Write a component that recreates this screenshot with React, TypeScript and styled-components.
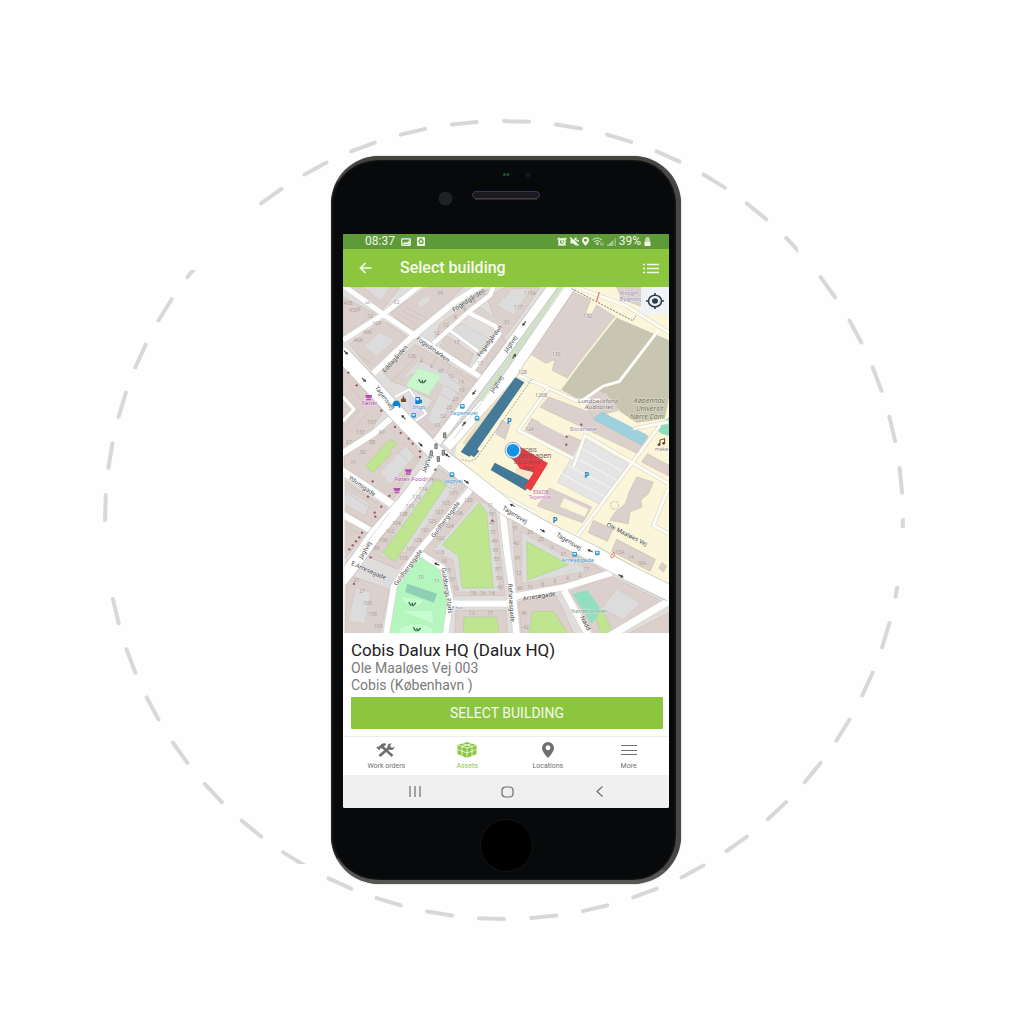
import React from "react";
import styled, { createGlobalStyle } from "styled-components";

const GlobalStyle = createGlobalStyle`
  *, *::before, *::after { box-sizing: border-box; }
  body {
    margin: 0;
    background: #fefefe;
    font-family: Roboto, "Open Sans", "Liberation Sans", sans-serif;
  }
`;

/* ---------- page and phone shell ---------- */

const Stage = styled.main`
  display: grid;
  place-items: center;
  min-height: 100vh;
  padding: 16px 12px 0 0;
  overflow: hidden;
`;

const Ring = styled.svg`
  grid-area: 1 / 1;
  width: 820px;
  height: auto;
`;

const Phone = styled.section`
  grid-area: 1 / 1;
  display: flex;
  flex-direction: column;
  width: 350px;
  max-width: 100%;
  padding: 0 7px 0 11px;
  background: #07090a;
  border-style: solid;
  border-width: 4px 5px 4px 1px;
  border-color: #474540 #474744 #565653 #26241f;
  border-radius: 48px;
  box-shadow: inset 0 0 2px 1px #1b1c1c, 0 0 1px #3a3936;
`;

const TopBezel = styled.svg`
  display: block;
  width: 100%;
  height: 74px;
`;

const BottomBezel = styled.div`
  display: flex;
  justify-content: center;
  align-items: center;
  height: 72px;
  padding-top: 2px;
`;

const HomeButton = styled.button`
  width: 53px;
  height: 53px;
  padding: 0;
  border: 1px solid #121617;
  border-radius: 50%;
  background: #000;
`;

const Screen = styled.div`
  display: flex;
  flex-direction: column;
  background: #fff;
  border-radius: 2px;
  overflow: hidden;
`;

/* ---------- bars ---------- */

const StatusBar = styled.header`
  display: flex;
  align-items: center;
  justify-content: space-between;
  height: 15px;
  padding: 0 18px 0 22px;
  background: #5f9a38;
  color: #eef6e6;
  font-size: 12px;
  line-height: 15px;
`;

const StatusGroup = styled.div<{ $gap: number }>`
  display: flex;
  align-items: center;
  gap: ${(p) => p.$gap}px;
`;

const AppBar = styled.header`
  display: flex;
  align-items: center;
  height: 38px;
  padding: 0 8px 0 12px;
  background: #8bc63e;
  color: #f6fbef;
`;

const AppTitle = styled.h1`
  flex: 1;
  margin: 0 0 0 25px;
  font-size: 16px;
  line-height: 20px;
  font-weight: 500;
`;

const IconButton = styled.button`
  display: flex;
  align-items: center;
  justify-content: center;
  padding: 0;
  border: 0;
  background: none;
  color: inherit;
  width: 20px;
  height: 20px;
`;

/* ---------- map ---------- */

const MapPane = styled.div`
  position: relative;
`;

const MapDrawing = styled.svg`
  display: block;
  width: 100%;
  height: auto;
`;

const LocateButton = styled(IconButton)`
  position: absolute;
  top: 0;
  right: 0;
  width: 28px;
  height: 27px;
  background: rgba(238, 243, 250, 0.9);
  color: #2c3e50;
`;

/* ---------- details and tabs ---------- */

const Details = styled.section`
  padding: 7px 6px 7px 8px;
  border-bottom: 1px solid #ededed;
`;

const BuildingName = styled.h2`
  margin: 0;
  color: #222;
  font-size: 17px;
  line-height: 20px;
  font-weight: 400;
`;

const Address = styled.p`
  margin: 0;
  color: #7b7b7b;
  font-size: 14px;
  line-height: 17px;
`;

const PrimaryButton = styled.button`
  display: block;
  width: 100%;
  height: 32px;
  margin-top: 3px;
  padding: 0;
  border: 0;
  border-radius: 1px;
  background: #8cc63f;
  color: #f4faec;
  font-family: inherit;
  font-size: 14px;
  line-height: 20px;
  text-transform: uppercase;
`;

const Tabs = styled.nav`
  display: grid;
  grid-template-columns: repeat(4, 1fr);
  height: 38px;
  padding: 0 0 0 3px;
`;

const Tab = styled.button<{ $active?: boolean }>`
  display: flex;
  flex-direction: column;
  align-items: center;
  gap: 3px;
  padding: 5px 0 0;
  border: 0;
  background: none;
  color: ${(p) => (p.$active ? "#8bc540" : "#6f6f6f")};
  font-family: inherit;
  font-size: 7px;
  line-height: 10px;
`;

const SystemBar = styled.nav`
  display: grid;
  grid-template-columns: repeat(3, 1fr);
  justify-items: center;
  align-items: center;
  height: 33px;
  padding: 0 24px 0 26px;
  background: #f0f0f1;
  color: #6d6d6d;
`;

/* ---------- map data: 3 drawing units to one screen pixel ---------- */

type Street = { d: string; w: number };

const STREETS: Street[] = [
  { d: "M9 165L130 87L240 0", w: 15 },
  { d: "M9 0L130 87L225 150L300 198L425 278", w: 15 },
  { d: "M100 265L215 155L345 50L425 0", w: 17 },
  { d: "M280 175L385 80L450 30L462 0", w: 13 },
  { d: "M385 82L465 122L478 145L395 258", w: 13 },
  { d: "M330 135L415 198", w: 9 },
  { d: "M0 508L100 445L168 385", w: 18 },
  { d: "M9 335L42 372L9 408", w: 9 },
  { d: "M165 335L208 312L258 385L215 415", w: 7 },
  { d: "M0 553L80 605L160 660", w: 22 },
  { d: "M0 683L95 737", w: 18 },
  { d: "M395 608L235 798L162 902L138 1050", w: 18 },
  { d: "M235 800L308 848L332 945L316 1050", w: 17 },
  { d: "M335 955L500 955L530 932L675 905L815 862", w: 19 },
  { d: "M488 680L500 790L515 900L530 1050", w: 20 },
  { d: "M672 915L748 1055", w: 20 },
  { d: "M990 945L800 1058", w: 22 },
];

const MAIN_STREETS: Street[] = [
  { d: "M0 200L90 296L190 405L285 500L400 588L500 668L620 735L760 805L870 865L992 925", w: 46 },
  { d: "M640 0L485 213L290 470", w: 27 },
  { d: "M692 0L508 272L320 485", w: 32 },
  { d: "M300 490L270 545L205 635L110 740L50 825L0 890", w: 38 },
];

const CAMPUS_ROADS = [
  "M700 2L860 62L992 145",
  "M515 262L620 305L705 345L780 345",
  "M625 308L535 435L600 468L700 520",
  "M700 545L735 450L870 528L985 595",
  "M960 420L705 762",
  "M590 685L480 625",
  "M880 430L985 410",
  "M985 610L940 720L985 745",
];

const BUILDINGS = [
  "20,5 180,5 127,74",
  "9,35 108,86 9,150",
  "150,82 262,5 370,5 340,36 218,136",
  "28,177 127,106 200,152 92,252",
  "130,262 225,178 412,285 292,468 218,412 250,385 280,345 190,300 160,290",
  "298,118 440,12 452,22 312,142 285,160",
  "402,76 420,66 478,105 466,112",
  "318,150 400,205 385,242 300,182",
  "408,242 484,150 500,170 415,276",
  "9,240 128,378 98,428 9,492",
  "14,508 155,400 248,508 158,644 14,552",
  "9,582 140,668 98,726 9,672",
  "9,705 80,742 12,822",
  "292,548 378,600 226,796 172,852 82,812",
  "402,620 462,650 472,720 495,930 345,932 322,838 248,796",
  "348,975 498,975 502,1045 345,1045",
  "22,868 148,912 120,1045 14,1045",
  "518,710 555,718 800,862 680,892 530,915",
  "535,950 648,930 702,1045 545,1045",
  "690,918 812,872 975,952 812,1040 765,1045",
  "865,1045 987,982 987,1045",
  "440,38 495,5 600,5 540,95 490,160 470,110",
  "700,20 752,45 736,84 756,86 770,60 826,95 682,278 636,255 646,222 618,234 570,205",
  "627,335 785,395 925,455 900,508 600,365",
  "575,400 630,425 728,468 702,512 555,435",
  "922,505 987,540 987,572 905,530",
  "628,608 755,665 728,712 592,662",
  "486,405 510,418 495,462 467,445",
  "890,575 940,590 925,625 902,645 906,665 870,680 865,715 810,705 826,680 856,655 868,620",
  "760,705 818,732 802,768 745,742",
  "830,762 946,822 930,858 815,798",
  "966,832 980,842 970,860 956,848",
  "830,5 930,5 900,62 845,40",
  "760,310 800,325 835,375 760,395 740,370",
];

const COURTYARDS = [
  "68,5 150,5 124,46",
  "70,182 120,140 166,166 110,212",
  "180,285 238,225 372,290 290,430 262,400 310,300 235,258",
  "345,125 368,115 450,162 410,200",
  "470,60 520,10 575,10 520,90",
  "48,905 92,922 74,1015 24,1008",
  "120,560 200,480 225,510 150,600",
  "20,615 90,655 75,690 9,655",
  "265,580 350,600 200,800 120,815",
  "410,645 450,660 480,920 355,920 340,825 280,795",
  "545,740 750,855 545,895",
  "830,912 902,952 850,1002 785,970",
  "230,50 262,30 275,45 240,68",
];

const GREENS = [
  "78,540 150,462 172,474 152,492 152,506 98,562",
  "290,580 322,596 165,828 128,802",
  "418,652 440,680 460,908 366,908 356,812 308,778",
  "372,995 470,995 478,1045 370,1045",
  "560,768 685,838 562,885",
  "578,978 640,978 685,1045 568,1045",
  "765,990 790,975 815,1038 785,1050",
];

const HOUSE_ROWS: { from: [number, number]; to: [number, number]; n: string[] }[] = [
  { from: [24, 55], to: [90, 92], n: ["40B", "6", "12"] },
  { from: [55, 165], to: [110, 115], n: ["40A", "40A", "104"] },
  { from: [215, 212], to: [362, 290], n: ["126", "4", "6", "47", "12", "14"] },
  { from: [365, 315], to: [290, 420], n: ["16", "23", "25", "32", "30"] },
  { from: [290, 145], to: [430, 24], n: ["12", "12", "8", "6", "4", "8"] },
  { from: [26, 470], to: [95, 410], n: ["27", "137", "107"] },
  { from: [125, 440], to: [40, 530], n: ["90", "88", "92", "11"] },
  { from: [270, 585], to: [110, 790], n: ["176", "114", "112", "110", "108", "104", "102", "100", "98"] },
  { from: [340, 625], to: [190, 820], n: ["131", "125", "127", "123", "121", "129", "117", "115"] },
  { from: [385, 645], to: [300, 760], n: ["120", "126", "124", "122"] },
  { from: [450, 660], to: [480, 905], n: ["11", "15", "47", "51", "49", "53", "55", "57", "59", "43"] },
  { from: [300, 800], to: [348, 910], n: ["118", "16", "15", "13", "12"] },
  { from: [400, 925], to: [455, 925], n: ["18", "16", "14"] },
  { from: [395, 985], to: [450, 985], n: ["13", "17"] },
  { from: [525, 730], to: [540, 910], n: ["31", "42", "47", "12", "46"] },
  { from: [570, 740], to: [738, 852], n: ["23", "25", "2", "21", "7", "17"] },
  { from: [570, 905], to: [720, 870], n: ["11", "8", "6", "4", "2"] },
  { from: [552, 985], to: [558, 1025], n: ["46", "42"] },
  { from: [50, 885], to: [115, 1022], n: ["21", "27", "108", "105", "103"] },
  { from: [40, 75], to: [300, 25], n: ["430", "62", "54"] },
  { from: [570, 25], to: [500, 110], n: ["115A", "117", "31"] },
  { from: [350, 170], to: [420, 235], n: ["15", "17"] },
  { from: [840, 800], to: [905, 835], n: ["13A", "14", "18A"] },
];

type Label = { x: number; y: number; r?: number; t: string; s?: number; c?: string; i?: boolean; bare?: boolean };

const LABELS: Label[] = [
  { x: 135, y: 263, r: -48, t: "Eddagården" },
  { x: 228, y: 162, r: 36, t: "Fogedmarken" },
  { x: 342, y: 80, r: -33, t: "Fogedgården" },
  { x: 420, y: 216, r: -53, t: "Fogedgården" },
  { x: 104, y: 308, r: 53, t: "Tagensvej" },
  { x: 458, y: 322, r: -55, t: "Jagtvej" },
  { x: 500, y: 202, r: -55, t: "Jagtvej" },
  { x: 25, y: 580, r: 35, t: "Ydunsgade" },
  { x: 255, y: 560, r: -66, t: "Jagtvej" },
  { x: 66, y: 822, r: -60, t: "Jagtvej" },
  { x: 32, y: 838, r: 24, t: "E.Arresøgade" },
  { x: 282, y: 758, r: -53, t: "Guldbergsgade" },
  { x: 170, y: 902, r: -53, t: "Guldbergsgade" },
  { x: 304, y: 848, r: 81, t: "Guldbergs Plads" },
  { x: 486, y: 672, r: 31, t: "Tagensvej" },
  { x: 648, y: 752, r: 31, t: "Tagensvej" },
  { x: 504, y: 896, r: 86, t: "Refsnæsgade" },
  { x: 550, y: 946, r: -9, t: "Arresøgade" },
  { x: 720, y: 996, r: 62, t: "Nødd" },
  { x: 798, y: 722, r: 27, t: "Ole Maaløes Vej" },
  { x: 714, y: 354, t: "Lundbeckfond-", s: 18, c: "#7d7677" },
  { x: 734, y: 370, t: "Auditoriet", s: 18, c: "#7d7677" },
  { x: 882, y: 352, t: "Københav", s: 21, c: "#6c6d45", i: true },
  { x: 888, y: 378, t: "Universit", s: 21, c: "#6c6d45", i: true },
  { x: 870, y: 402, t: "Nørre Cam", s: 21, c: "#6c6d45", i: true },
  { x: 690, y: 438, t: "Biocenteret", s: 15, c: "#8d88b4" },
  { x: 842, y: 29, t: "Krogh", s: 18, c: "#8b8fbb" },
  { x: 838, y: 47, t: "Bygning", s: 18, c: "#8b8fbb" },
  { x: 66, y: 360, t: "Fætter", s: 15, c: "#b54cb5" },
  { x: 164, y: 586, t: "Føtex Food", s: 18, c: "#b54cb5" },
  { x: 218, y: 372, t: "Ingo", s: 18, c: "#4f8fca" },
  { x: 330, y: 389, t: "Tagensvej", s: 18, c: "#4a96d2" },
  { x: 312, y: 594, t: "Jagtvej", s: 18, c: "#4a96d2" },
  { x: 664, y: 830, t: "Arresøgade", s: 18, c: "#4a96d2" },
  { x: 580, y: 626, t: "ESSOB", s: 15, c: "#b0609d" },
  { x: 566, y: 642, t: "Tagensvej", s: 15, c: "#c47fb0" },
  { x: 546, y: 500, t: "COBIS", s: 15, c: "#75545a", bare: true },
  { x: 508, y: 518, t: "Copenhagen", s: 21, c: "#75545a", bare: true },
  { x: 522, y: 536, t: "Bio Science", s: 15, c: "#75545a", bare: true },
  { x: 550, y: 554, t: "Park", s: 15, c: "#75545a", bare: true },
  { x: 694, y: 983, t: "Nørrebrohallen", s: 15, c: "#6da383" },
  { x: 76, y: 55, t: "4371", s: 12, c: "#b48bb4" },
  { x: 535, y: 266, t: "128", s: 15, c: "#8b8080" },
  { x: 730, y: 99, t: "132", s: 15, c: "#8b8080" },
  { x: 636, y: 212, t: "130", s: 15, c: "#8b8080" },
  { x: 586, y: 334, t: "126B", s: 15, c: "#8b8080" },
  { x: 556, y: 437, t: "124", s: 15, c: "#8b8080" },
  { x: 234, y: 882, t: "10", s: 15, c: "#5c8a66" },
  { x: 282, y: 892, t: "11", s: 15, c: "#5c8a66" },
  { x: 945, y: 496, t: "make", s: 15, c: "#8b8080" },
  { x: 336, y: 970, t: "P-hus", s: 12, c: "#6a77c8" },
];

const ARROWS: [number, number, number][] = [
  [18, 202, 45], [72, 284, 45], [190, 395, 225], [242, 478, 45], [402, 322, 125], [372, 415, -52],
  [552, 115, 125], [523, 212, -52], [322, 510, 215], [380, 590, 35], [290, 836, 205], [517, 660, 205],
  [608, 736, 30], [750, 796, 205], [843, 872, 30],
];

const SIGNALS: [number, number][] = [[314, 450], [288, 483], [274, 504], [310, 502], [295, 521]];
const BUS_STOPS: [number, number][] = [[221, 390], [367, 363], [411, 399], [336, 568], [704, 807], [772, 803]];
const PARKING: [number, number][] = [[508, 408], [740, 571], [645, 705]];
const SHOPS: [number, number][] = [[86, 337], [205, 560], [171, 616]];
const DOTS: [number, number][] = [
  [25, 262], [50, 300], [124, 376], [165, 425], [182, 443], [206, 460], [218, 475], [240, 498], [240, 515],
  [98, 588], [148, 632], [84, 634], [124, 664], [104, 682], [106, 694], [66, 742], [58, 756], [48, 768],
  [38, 780], [28, 792], [92, 816], [286, 553], [457, 706], [42, 896], [724, 418], [680, 454], [679, 478],
];

function CityMap() {
  return (
    <MapDrawing viewBox="9 5 978 1038" role="img" aria-label="Map around Tagensvej and Jagtvej, København">
      <rect x="0" y="0" width="1000" height="1060" fill="#e0dedd" />
      <polygon points="700,0 990,0 990,905 870,848 760,788 620,715 500,645 420,582 345,510 350,470" fill="#fbf5d9" />
      <polygon points="830,97 987,165 987,335 975,400 890,412 842,380 797,322 720,345 660,312 720,228" fill="#c8c6b0" />
      <polygon points="987,395 948,432 965,445 987,452" fill="#8edcc0" />

      <g fill="#dbd0cb" stroke="#cfbdb6" strokeWidth="2">
        {BUILDINGS.map((p) => <polygon key={p} points={p} />)}
      </g>
      <g fill="#dddcdc" stroke="#d0c2bb" strokeWidth="1.5">
        {COURTYARDS.map((p) => <polygon key={p} points={p} />)}
      </g>
      <g fill="#bfe590" stroke="#b4cf95" strokeWidth="2">
        {GREENS.map((p) => <polygon key={p} points={p} />)}
      </g>
      <g stroke="#cfbdb6" strokeWidth="2" fill="none">
        <path d="M160 95L215 130M172 85L230 118M185 75L245 106M196 66L256 96M50 205L95 235M140 112L190 146" />
        <path d="M32 605L110 655M24 625L95 670M30 730L62 748M145 640L235 512M175 500L215 540M190 470L230 520" />
        <path d="M30 440L85 380M15 425L60 370M345 255L395 290M330 280L385 315M315 300L372 335M300 325L358 360" />
        <path d="M150 292L232 212M250 215L235 240M290 215L276 240M330 240L318 264M95 330L60 365M30 300L70 350" />
        <path d="M275 575L360 625M250 610L275 625M225 645L250 660M200 680L225 695M175 715L200 730M150 750L175 765" />
      </g>

      {/* park, schools and pools */}
      <polygon points="225,262 238,248 305,270 266,330 196,302" fill="#c9f6cd" stroke="#a9d9a9" />
      <polygon points="242,812 314,855 322,955 308,1045 140,1045 160,920" fill="#b4f6bd" />
      <path d="M182 935Q205 975 240 960L250 945M185 975L278 975L280 1015M178 1030Q230 1000 278 1030L278 1045L180 1045Z" fill="#c7fbd0" stroke="#a6dfa6" strokeDasharray="6 3" />
      <polygon points="202,895 291,925 282,952 195,920" fill="#8fcfb5" />
      <polygon points="698,925 742,915 785,975 755,1015" fill="#8fdfc0" />
      <polygon points="785,380 922,450 905,480 760,402" fill="#9fd0de" stroke="#8bb9c6" />
      <polygon points="612,390 695,430 682,455 598,412" fill="#fbf5d9" />
      <polygon points="672,638 745,672 734,694 660,664" fill="#fbf5d9" />
      <polygon points="730,458 865,535 785,660 652,590" fill="#e6e5e6" stroke="#d6cfce" strokeWidth="2" />
      <path d="M715 485L848 558M698 512L832 585M680 538L815 610M665 565L800 638" stroke="#f7f7f7" strokeWidth="3" />
      <polygon points="395,75 420,66 487,112 475,125" fill="#dcd3ce" />
      <path d="M200 340L212 325L248 380L220 402Z" fill="#dad8e8" />

      {/* minor streets */}
      <path d="M15 832L70 850L165 898" stroke="#dcdbe0" strokeWidth="24" fill="none" />
      <g fill="none" stroke="#d2cecc" strokeLinejoin="round">
        {STREETS.map((s) => <path key={s.d} d={s.d} strokeWidth={s.w + 3} />)}
        {CAMPUS_ROADS.map((d) => <path key={d} d={d} strokeWidth="12" />)}
      </g>
      <g fill="none" stroke="#fff" strokeLinejoin="round">
        {STREETS.map((s) => <path key={s.d} d={s.d} strokeWidth={s.w} />)}
      </g>
      <g fill="none" stroke="#fdfcf1" strokeLinejoin="round">
        {CAMPUS_ROADS.map((d) => <path key={d} d={d} strokeWidth="9" />)}
      </g>
      <path d="M720 350L790 302L838 288L955 135" fill="none" stroke="#fdfcf8" strokeWidth="9" />
      <path d="M826 97L720 232L662 312" fill="none" stroke="#fbf5d9" strokeWidth="5" />

      {/* main streets */}
      <g fill="none" stroke="#c4c0bd" strokeLinejoin="round">
        {MAIN_STREETS.map((s) => <path key={s.d} d={s.d} strokeWidth={s.w + 4} />)}
      </g>
      <path d="M545 245L372 478" stroke="#eadfc8" strokeWidth="14" fill="none" />
      <g fill="none" stroke="#fff" strokeLinejoin="round">
        {MAIN_STREETS.map((s) => <path key={s.d} d={s.d} strokeWidth={s.w} />)}
      </g>
      <path d="M667 0L497 240L420 345" fill="none" stroke="#cbe3c4" strokeWidth="11" />
      <path d="M658 0L488 236L330 450M677 0L506 246L340 462" fill="none" stroke="#cdcac7" strokeWidth="2" />
      <path d="M265 575L120 765M150 680L60 800" stroke="#cfcac8" strokeWidth="2" />

      {/* highlighted buildings */}
      <polygon points="526,276 553,291 412,492 418,498 402,516 394,510 388,514 362,500" fill="#457b99" />
      <path d="M575 282L430 490L408 520L390 528L362 522" fill="none" stroke="#69809a" strokeWidth="2" strokeDasharray="6 4" />
      <path d="M695 10L878 106L888 92" fill="none" stroke="#7d7f9c" strokeWidth="3" strokeDasharray="6 4" />
      <path d="M778 20L770 48" stroke="#e5846c" strokeWidth="4" />
      <polygon points="464,532 571,586 557,616 452,554" fill="#427a96" />
      <polygon points="494,499 540,484 624,534 573,616 552,606 580,562 540,552 528,532" fill="#ea3d42" />
      <polygon points="530,548 552,554 578,560 566,582 524,560" fill="#f3e6cd" />
      <circle cx="824" cy="660" r="12" fill="none" stroke="#c9bdb0" strokeWidth="3" strokeDasharray="7 3" />
      <path d="M812 812L822 800L824 812L815 818Z" fill="none" stroke="#e5846c" strokeWidth="3" />

      {/* house numbers */}
      <g fill="#ab9d97" fontFamily='"Noto Sans", sans-serif' fontSize="15">
        {HOUSE_ROWS.flatMap((row, k) =>
          row.n.map((n, i) => {
            const f = row.n.length > 1 ? i / (row.n.length - 1) : 0;
            return (
              <text key={k + "-" + i} x={row.from[0] + (row.to[0] - row.from[0]) * f} y={row.from[1] + 5 + (row.to[1] - row.from[1]) * f} textAnchor="middle">
                {n}
              </text>
            );
          })
        )}
      </g>

      {/* points of interest */}
      {DOTS.map(([x, y]) => <circle key={x + "," + y} cx={x} cy={y} r="3.5" fill="#9b5468" />)}
      {ARROWS.map(([x, y, r]) => (
        <path key={x + "," + y} transform={`translate(${x} ${y}) rotate(${r})`} d="M-9 -1.5H0V-5L9 0L0 5V1.5H-9Z" fill="#3c3c3c" />
      ))}
      {SIGNALS.map(([x, y]) => (
        <g key={x + "," + y}>
          <rect x={x - 5} y={y - 9} width="10" height="18" rx="4" fill="#777" />
          <path d={`M${x - 2} ${y - 4}h4M${x - 2} ${y}h4M${x - 2} ${y + 4}h4`} stroke="#ddd" strokeWidth="2" />
        </g>
      ))}
      {BUS_STOPS.map(([x, y]) => (
        <g key={x + "," + y}>
          <rect x={x - 7} y={y - 7} width="14" height="14" rx="3" fill="#3a9acb" />
          <rect x={x - 4} y={y - 4} width="8" height="5" fill="#d5edf8" />
        </g>
      ))}
      {SHOPS.map(([x, y]) => (
        <path key={x + "," + y} d={`M${x - 11} ${y - 8}h22l-4 10h-14zM${x - 7} ${y + 4}h14v4h-14z`} fill="#b650b4" />
      ))}
      <path d="M157 367V356L163 346H175L181 356V367H176V362H163V367Z" fill="#0d85c8" />
      <path d="M226 335H240V341L246 345V354H240V356H226ZM229 338V345H237V338Z" fill="#0d85c8" />
      <path d="M183 350V340H187L190 330L194 340H198V350Z" fill="#7b4a26" />
      <g fill="none" stroke="#2f6b3c" strokeWidth="4">
        <path d="M236 282L243 293M247 284V294M258 284L250 293" />
        <path d="M206 950L213 961M217 952V962M228 952L220 961" />
        <path d="M220 1026L227 1037M231 1028V1038M242 1028L234 1037" />
      </g>
      <path d="M960 478V464L974 460V474" fill="none" stroke="#6b4020" strokeWidth="3" />
      <circle cx="957" cy="478" r="4" fill="#6b4020" />
      <circle cx="971" cy="474" r="4" fill="#6b4020" />
      {PARKING.map(([x, y]) => (
        <text key={x + "," + y} x={x} y={y + 8} textAnchor="middle" fontFamily='"Noto Sans", sans-serif' fontWeight="700" fontSize="24" fill="#1f86c6">P</text>
      ))}

      {LABELS.map((l) => (
        <text
          key={l.t + l.x}
          transform={`translate(${l.x} ${l.y}) rotate(${l.r ?? 0})`}
          fontFamily='"Noto Sans", "Open Sans", sans-serif'
          fontSize={l.s ?? 18}
          fontStyle={l.i ? "italic" : "normal"}
          fill={l.c ?? "#3b3b3b"}
          stroke={l.bare ? "none" : "#fff"}
          strokeWidth="3"
          strokeOpacity="0.5"
          paintOrder="stroke"
        >
          {l.t}
        </text>
      ))}

      <circle cx="519" cy="495" r="24" fill="#f2f7fb" stroke="#6c8aa8" strokeWidth="2" />
      <circle cx="519" cy="495" r="19" fill="#1492e6" />
      <rect x="9" y="560" width="5" height="490" fill="#f3f1f2" />
    </MapDrawing>
  );
}

/* ---------- icons ---------- */

const PictureIcon = () => (
  <svg width="10" height="8" viewBox="0 0 20 16" fill="none" stroke="currentColor" strokeWidth="2.5">
    <rect x="1.5" y="1.5" width="17" height="13" rx="1" />
    <path d="M3 12L8 8L11 10L17 5V12.500Z" fill="currentColor" strokeWidth="1" />
  </svg>
);
const CaptureIcon = () => (
  <svg width="8" height="9" viewBox="0 0 16 18">
    <rect width="16" height="18" rx="2" fill="currentColor" />
    <circle cx="8" cy="9" r="4" fill="none" stroke="#5f9a38" strokeWidth="2.500" />
    <path d="M5 2.500H11" stroke="#5f9a38" strokeWidth="1.500" />
  </svg>
);
const AlarmIcon = () => (
  <svg width="10" height="9" viewBox="0 0 20 18" fill="none" stroke="currentColor" strokeWidth="3.500">
    <circle cx="10" cy="9.500" r="6" />
    <path d="M1 5L5 1.500M19 5L15 1.500M3 17L6 14M17 17L14 14M10 6V10L13 11" strokeWidth="3" />
  </svg>
);
const MuteIcon = () => (
  <svg width="9" height="9" viewBox="0 0 18 18">
    <path d="M1 5H6L13 0V18L6 13H1Z" fill="currentColor" />
    <path d="M2 0L18 14" stroke="#5f9a38" strokeWidth="2" />
    <path d="M0 1L17 17M14 6L18 9" stroke="currentColor" strokeWidth="3" />
  </svg>
);
const PinIcon = ({ w, h, hole }: { w: number; h: number; hole: string }) => (
  <svg width={w} height={h} viewBox="0 0 14 18" preserveAspectRatio="none">
    <path d="M7 0A7 6.700 0 0 0 0 6.700C0 11.500 7 18 7 18S14 11.500 14 6.700A7 6.700 0 0 0 7 0Z" fill="currentColor" />
    <circle cx="7" cy="6.500" r="2.800" fill={hole} />
  </svg>
);
const WifiIcon = () => (
  <svg width="12" height="9" viewBox="0 0 24 18" fill="none" stroke="currentColor" strokeWidth="2" opacity="0.85">
    <path d="M1 6Q10 -2 20 6M4 9.500Q10 4 17 9.500M7.500 12.500Q10.500 10 14 12.500" />
    <path d="M9 14L10.500 16L12 14Z" fill="currentColor" />
    <path d="M18 11V17M22 11V17" strokeWidth="1.500" />
  </svg>
);
const SignalIcon = () => (
  <svg width="9" height="8" viewBox="0 0 18 16" stroke="currentColor" strokeWidth="2">
    <path d="M2 13V16M6 10V16M10 6V16" />
    <path d="M14 3V16M17 0V16" opacity="0.4" />
  </svg>
);
const BatteryIcon = () => (
  <svg width="7" height="9" viewBox="0 0 14 18" fill="currentColor">
    <path d="M4 0H10V3H12V9H2V3H4Z" opacity="0.65" />
    <path d="M1 9H13V18H1Z" />
  </svg>
);
const BackArrowIcon = () => (
  <svg width="13" height="12" viewBox="0 0 13 12" fill="none" stroke="currentColor" strokeWidth="1.700">
    <path d="M12.500 6H1.500M6.500 1L1.500 6L6.500 11" />
  </svg>
);
const ListIcon = () => (
  <svg width="16" height="11" viewBox="0 0 16 11" stroke="currentColor" strokeWidth="1.500">
    <path d="M0 1.500H2M4 1.500H16M0 5.500H2M4 5.500H16M0 9.500H2M4 9.500H16" />
  </svg>
);
const LocateIcon = () => (
  <svg width="18" height="16" viewBox="0 0 18 16" fill="none" stroke="currentColor">
    <ellipse cx="9" cy="8" rx="6.500" ry="5.800" strokeWidth="1.600" />
    <path d="M9 0V3M9 13V16M0 8H3M15 8H18" strokeWidth="1.600" />
    <ellipse cx="9" cy="8" rx="3" ry="2.700" fill="currentColor" stroke="none" />
  </svg>
);
const ToolsIcon = () => (
  <svg width="20" height="16" viewBox="0 0 40 32" fill="none" stroke="currentColor">
    <path d="M13 10L33 28" strokeWidth="5" />
    <path d="M4 11L11 4Q16 1 21 4L12 13Z" fill="currentColor" stroke="none" />
    <path d="M2 10L8 15" strokeWidth="4" />
    <path d="M7 28L27 11" strokeWidth="5.500" />
    <path d="M31 3A7 6.500 0 1 0 37 9L32 12L28 8Z" fill="currentColor" stroke="none" />
  </svg>
);
const AssetsIcon = () => (
  <svg width="20" height="16" viewBox="0 0 40 32">
    <path d="M20 0L39 6V24L20 32L1 24V6Z" fill="currentColor" />
    <path d="M1 6L20 12L39 6M20 12V32M1 15L20 22L39 15M10 3L30 9V28M30 3L10 9V28" fill="none" stroke="#fff" strokeWidth="1.500" />
  </svg>
);
const MenuIcon = () => (
  <svg width="16" height="16" viewBox="0 0 16 16" stroke="currentColor" strokeWidth="1">
    <path d="M0 3.500H16M0 8.500H16M0 12.500H16" />
  </svg>
);
const RecentsIcon = () => (
  <svg width="12" height="11" viewBox="0 0 12 11" stroke="currentColor" strokeWidth="1.200">
    <path d="M1 0V11M6 0V11M11 0V11" />
  </svg>
);
const HomeIcon = () => (
  <svg width="13" height="12" viewBox="0 0 13 12" fill="none" stroke="currentColor" strokeWidth="1.200">
    <rect x="1" y="1" width="11" height="10" rx="3.500" />
  </svg>
);
const ChevronIcon = () => (
  <svg width="7" height="11" viewBox="0 0 7 11" fill="none" stroke="currentColor" strokeWidth="1.200">
    <path d="M6.500 0.500L1 5.500L6.500 10.500" />
  </svg>
);

/* ---------- dashed ring ---------- */

const RING = { cx: 504, cy: 520, r: 399, count: 48, offset: 1.8, half: 1.8 };
const GAPS = [
  { x: 194, y: 200, width: 62, height: 70 },
  { x: 182, y: 240, width: 40, height: 30 },
  { x: 798, y: 236, width: 20, height: 40 },
  { x: 888, y: 528, width: 30, height: 58 },
  { x: 90, y: 526, width: 30, height: 60 },
  { x: 296, y: 864, width: 24, height: 14 },
];

function DashedRing() {
  const at = (deg: number) => {
    const a = (deg * Math.PI) / 180;
    return `${(RING.cx + RING.r * Math.sin(a)).toFixed(2)} ${(RING.cy - RING.r * Math.cos(a)).toFixed(2)}`;
  };
  const dashes = Array.from({ length: RING.count }, (_, i) => {
    const mid = RING.offset + (360 / RING.count) * i;
    return `M${at(mid - RING.half)}L${at(mid + RING.half)}`;
  });
  return (
    <Ring viewBox="96 110 820 820" aria-hidden="true">
      <path d={dashes.join("")} stroke="#d8d8d9" strokeWidth="4" strokeLinecap="round" />
      {GAPS.map((g) => <rect key={g.x} {...g} fill="#fefefe" />)}
    </Ring>
  );
}

export default function App() {
  return (
    <>
      <GlobalStyle />
      <Stage>
        <DashedRing />
        <Phone aria-label="Phone">
          <TopBezel viewBox="343 160 326 74" aria-hidden="true">
            <circle cx="445.500" cy="198.500" r="7" fill="#1f2223" />
            <rect x="472.500" y="191.500" width="67" height="7" rx="3.500" fill="#1c1b22" stroke="#35345a" />
            <path d="M475 199H537" stroke="#5b4b34" />
            <circle cx="504.500" cy="174.500" r="1.500" fill="#0c5a2c" />
            <circle cx="508" cy="174.500" r="1.500" fill="#0c5a2c" />
            <circle cx="528" cy="175" r="2.500" fill="#121a17" />
          </TopBezel>
          <Screen>
            <StatusBar>
              <StatusGroup $gap={6}>
                <span>08:37</span>
                <PictureIcon />
                <CaptureIcon />
              </StatusGroup>
              <StatusGroup $gap={3}>
                <AlarmIcon />
                <MuteIcon />
                <PinIcon w={7} h={9} hole="#5f9a38" />
                <WifiIcon />
                <SignalIcon />
                <span>39%</span>
                <BatteryIcon />
              </StatusGroup>
            </StatusBar>
            <AppBar>
              <IconButton aria-label="Back"><BackArrowIcon /></IconButton>
              <AppTitle>Select building</AppTitle>
              <IconButton aria-label="Building list"><ListIcon /></IconButton>
            </AppBar>
            <MapPane>
              <CityMap />
              <LocateButton aria-label="My location"><LocateIcon /></LocateButton>
            </MapPane>
            <Details>
              <BuildingName>Cobis Dalux HQ (Dalux HQ)</BuildingName>
              <Address>Ole Maaløes Vej 003</Address>
              <Address>Cobis (København )</Address>
              <PrimaryButton>Select building</PrimaryButton>
            </Details>
            <Tabs aria-label="Sections">
              <Tab><ToolsIcon />Work orders</Tab>
              <Tab $active aria-current="page"><AssetsIcon />Assets</Tab>
              <Tab><PinIcon w={12} h={16} hole="#fff" />Locations</Tab>
              <Tab><MenuIcon />More</Tab>
            </Tabs>
            <SystemBar aria-label="System">
              <IconButton aria-label="Recent apps"><RecentsIcon /></IconButton>
              <IconButton aria-label="Home"><HomeIcon /></IconButton>
              <IconButton aria-label="Back to previous screen"><ChevronIcon /></IconButton>
            </SystemBar>
          </Screen>
          <BottomBezel>
            <HomeButton aria-label="Home button" />
          </BottomBezel>
        </Phone>
      </Stage>
    </>
  );
}
